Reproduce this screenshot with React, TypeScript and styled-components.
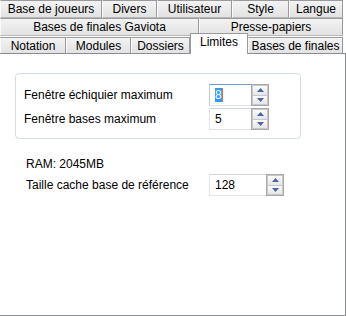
import React, { FC } from "react";
import styled, { createGlobalStyle } from "styled-components";

const GlobalStyle = createGlobalStyle`
  html, body {
    margin: 0;
    padding: 0;
    background: #ffffff;
  }
  body {
    font-family: "Liberation Sans", Arial, sans-serif;
    font-size: 12px;
    color: #000000;
  }
`;

const Window = styled.div`
  width: 346px;
  height: 316px;
  display: flex;
  flex-direction: column;
  background: #ffffff;
  overflow: hidden;
`;

const TabRow = styled.div<{ $last?: boolean }>`
  display: flex;
  height: ${(p) => (p.$last ? "16px" : "18px")};
  margin-top: ${(p) => (p.$last ? "1px" : "0")};
  padding-right: 3px;
  align-items: flex-end;
`;

const Tab = styled.div<{ $w: number; $active?: boolean; $last?: boolean }>`
  width: ${(p) => p.$w}px;
  height: ${(p) => (p.$active ? "21px" : p.$last ? "16px" : "18px")};
  margin-top: ${(p) => (p.$active ? "-4px" : "0")};
  margin-bottom: ${(p) => (p.$active ? "-1px" : "0")};
  box-sizing: border-box;
  display: flex;
  align-items: center;
  justify-content: center;
  padding-bottom: ${(p) => (p.$active ? "4px" : "0")};
  font-size: 12px;
  color: #000;
  white-space: nowrap;
  border: 1px solid #9a9a9e;
  border-left-color: ${(p) => (p.$active ? "#9a9a9e" : "#fafafa")};
  border-bottom: ${(p) =>
    p.$active || p.$last ? "none" : "1px solid #b8b8b8"};
  background: ${(p) =>
    p.$active ? "#ffffff" : "linear-gradient(#f3f3f3, #e2e2e2)"};
  position: relative;
  z-index: ${(p) => (p.$active ? 2 : 1)};
`;

const Panel = styled.div`
  flex: 1;
  box-sizing: border-box;
  border-top: 1px solid #8c8c94;
  border-right: 1px solid #8c8c94;
  border-bottom: 1px solid #8c8c94;
  background: #ffffff;
  display: flex;
  flex-direction: column;
  align-items: flex-start;
`;

const Group = styled.div`
  margin: 19px 0 0 15px;
  width: 286px;
  height: 66px;
  box-sizing: border-box;
  border: 1px solid #d4dde4;
  border-radius: 4px;
  padding: 10px 0 0 8px;
  display: flex;
  flex-direction: column;
  gap: 2px;
`;

const FieldRow = styled.div<{ $label: number }>`
  display: grid;
  grid-template-columns: ${(p) => p.$label}px auto;
  align-items: center;
  height: 22px;
`;

const Label = styled.span`
  font-size: 12px;
  line-height: 14px;
`;

const Info = styled.div`
  margin: 18px 0 0 26px;
  font-size: 12px;
  line-height: 14px;
`;

const Outside = styled.div`
  margin: 3px 0 0 26px;
`;

const Spin = styled.div<{ $w: number }>`
  width: ${(p) => p.$w}px;
  height: 22px;
  box-sizing: border-box;
  display: flex;
`;

const SpinField = styled.div<{ $focus?: boolean }>`
  flex: 1;
  box-sizing: border-box;
  border: 1px solid #dfe2e6;
  border-top-color: ${(p) => (p.$focus ? "#6f9bc9" : "#d2d6db")};
  border-left-color: ${(p) => (p.$focus ? "#b6cde4" : "#e4e7ea")};
  border-right: none;
  display: flex;
  align-items: center;
  padding-left: 5px;
  font-size: 12px;
  background: #ffffff;
`;

const Selected = styled.span`
  background: #3399ff;
  color: #ffffff;
  border-right: 1px solid #e07020;
  line-height: 14px;
`;

const Arrows = styled.div`
  width: 18px;
  box-sizing: border-box;
  border: 1px solid #a9a9ab;
  display: flex;
  flex-direction: column;
  gap: 1px;
  padding: 1px;
  background: #c8c8ca;
`;

const ArrowButton = styled.div`
  flex: 1;
  background: linear-gradient(#fbfbfb, #e6e6e8);
  display: flex;
  align-items: center;
  justify-content: center;
`;

const Arrow: FC<{ down?: boolean }> = ({ down }) => (
  <svg width="7" height="4" viewBox="0 0 7 4">
    <path d={down ? "M0 0h7L3.5 4z" : "M3.5 0L7 4H0z"} fill="#4a63a8" />
  </svg>
);

const SpinBox: FC<{ value: string; width: number; focus?: boolean }> = ({
  value,
  width,
  focus,
}) => (
  <Spin $w={width}>
    <SpinField $focus={focus}>
      {focus ? <Selected>{value}</Selected> : value}
    </SpinField>
    <Arrows>
      <ArrowButton>
        <Arrow />
      </ArrowButton>
      <ArrowButton>
        <Arrow down />
      </ArrowButton>
    </Arrows>
  </Spin>
);

export default function App() {
  return (
    <>
      <GlobalStyle />
      <Window>
        <TabRow>
          <Tab $w={102}>Base de joueurs</Tab>
          <Tab $w={55}>Divers</Tab>
          <Tab $w={75}>Utilisateur</Tab>
          <Tab $w={57}>Style</Tab>
          <Tab $w={54}>Langue</Tab>
        </TabRow>
        <TabRow>
          <Tab $w={199}>Bases de finales Gaviota</Tab>
          <Tab $w={144}>Presse-papiers</Tab>
        </TabRow>
        <TabRow $last>
          <Tab $w={66} $last>Notation</Tab>
          <Tab $w={65} $last>Modules</Tab>
          <Tab $w={59} $last>Dossiers</Tab>
          <Tab $w={58} $active>
            Limites
          </Tab>
          <Tab $w={95} $last>Bases de finales</Tab>
        </TabRow>
        <Panel>
          <Group>
            <FieldRow $label={185}>
              <Label>Fenêtre échiquier maximum</Label>
              <SpinBox value="8" width={60} focus />
            </FieldRow>
            <FieldRow $label={185}>
              <Label>Fenêtre bases maximum</Label>
              <SpinBox value="5" width={60} />
            </FieldRow>
          </Group>
          <Info>RAM: 2045MB</Info>
          <Outside>
            <FieldRow $label={183}>
              <Label>Taille cache base de référence</Label>
              <SpinBox value="128" width={75} />
            </FieldRow>
          </Outside>
        </Panel>
      </Window>
    </>
  );
}
